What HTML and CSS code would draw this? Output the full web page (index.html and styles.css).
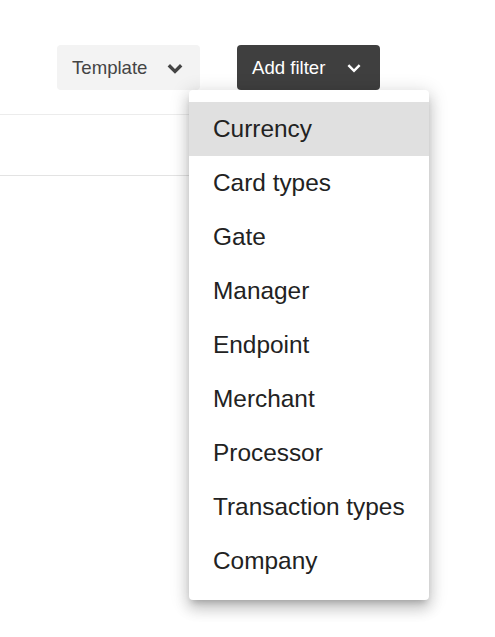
FILE: index.html
```html
<!DOCTYPE html>
<html lang="en">
<head>
  <meta charset="UTF-8" />
  <meta name="viewport" content="width=device-width, initial-scale=1.0" />
  <title>Filters</title>
  <link rel="stylesheet" href="styles.css">
</head>
<body>
  <div class="page">
    <div class="toolbar">
      <button class="btn btn-light" type="button">
        Template
        <svg viewBox="0 0 16 16" aria-hidden="true"><path d="M2.5 5.5 8 11l5.5-5.5" /></svg>
      </button>
      <div class="filter-wrap">
        <button class="btn btn-dark" type="button" aria-expanded="true">
          Add filter
          <svg viewBox="0 0 16 16" aria-hidden="true"><path d="M3 5.5 8 10.5l5-5" /></svg>
        </button>
        <ul class="menu" role="menu">
          <li class="menu-item active" role="menuitem">Currency</li>
          <li class="menu-item" role="menuitem">Card types</li>
          <li class="menu-item" role="menuitem">Gate</li>
          <li class="menu-item" role="menuitem">Manager</li>
          <li class="menu-item" role="menuitem">Endpoint</li>
          <li class="menu-item" role="menuitem">Merchant</li>
          <li class="menu-item" role="menuitem">Processor</li>
          <li class="menu-item" role="menuitem">Transaction types</li>
          <li class="menu-item" role="menuitem">Company</li>
        </ul>
      </div>
    </div>

    <div class="table">
      <div class="table-row"></div>
    </div>
  </div>
</body>
</html>
```

FILE: styles.css
```css
html, body {
  margin: 0;
  background-color: #ffffff;
}
body {
  font-family: "Liberation Sans", Arial, sans-serif;
  color: #222;
}
.page {
  min-height: 637px;
}
.toolbar {
  display: flex;
  justify-content: flex-end;
  gap: 37px;
  padding: 45px 115px 0 0;
  height: 45px;
}
.btn {
  display: inline-flex;
  align-items: center;
  justify-content: space-between;
  width: 143px;
  height: 45px;
  box-sizing: border-box;
  border: none;
  border-radius: 4px;
  font-family: inherit;
  font-size: 18.6px;
  cursor: pointer;
}
.btn svg {
  width: 18px;
  height: 18px;
  fill: none;
  stroke: currentColor;
  stroke-linecap: butt;
  stroke-linejoin: miter;
}
.btn-light {
  background-color: #f3f3f3;
  color: #444;
  padding: 0 16px 0 15px;
}
.btn-light svg {
  stroke-width: 3;
}
.btn-dark {
  background-color: #3f3f3f;
  color: #fff;
  padding: 0 17px 0 15px;
}
.btn-dark svg {
  stroke-width: 2.2;
}
.filter-wrap {
  position: relative;
}
.menu {
  position: absolute;
  top: 45px;
  left: -48px;
  width: 240px;
  margin: 0;
  padding: 12px 0;
  list-style: none;
  background-color: #fff;
  border-radius: 4px;
  box-shadow: 0 5px 6px -3px rgba(0, 0, 0, 0.2), 0 9px 14px 1px rgba(0, 0, 0, 0.14), 0 3px 18px 3px rgba(0, 0, 0, 0.12);
  z-index: 2;
}
.menu-item {
  height: 54px;
  line-height: 54px;
  padding-left: 24px;
  font-size: 24.4px;
  color: #222;
}
.menu-item.active {
  background-color: #e0e0e0;
}
.table {
  margin-top: 24px;
  width: 300px;
  border-top: 1px solid #ececec;
}
.table-row {
  height: 60px;
  border-bottom: 1px solid #e3e3e3;
}
```
